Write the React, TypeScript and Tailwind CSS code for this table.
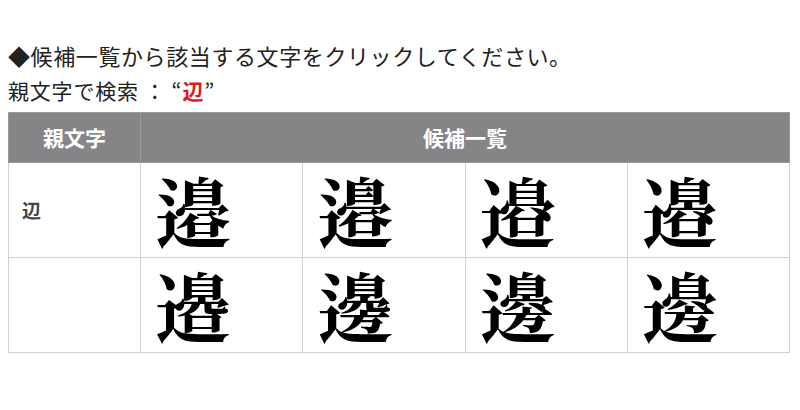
const SANS = "font-['Noto_Sans_CJK_JP','Noto_Sans',sans-serif]";

const rows: string[][] = [
  ["\u9089\u{E0100}", "\u9089\u{E0101}", "\u9089\u{E0102}", "\u9089\u{E0103}"],
  ["\u9089\u{E0104}", "\u908A\u{E0100}", "\u908A\u{E0101}", "\u908A\u{E0102}"],
];

export default function App() {
  return (
    <div className={`w-[800px] h-[410px] bg-white text-[#222] ${SANS}`}>
      <div className="pt-[38px] px-2">
        <p className="text-[22px] leading-[34px] tracking-[0.6px]">
          ◆候補一覧から該当する文字をクリックしてください。
        </p>
        <p className="text-[21px] leading-[34px] tracking-[0.8px] mt-[1px]">
          親文字で検索 ： “<span className="font-bold text-[#e0161b]">辺</span>”
        </p>
        <table className="w-[782px] mt-[5px] border-collapse table-fixed">
          <thead>
            <tr className="h-[50px] bg-[#858587] text-white text-[21px] font-bold">
              <th className="w-[132px] border border-[#9a9a9c]">親文字</th>
              <th colSpan={4} className="border border-[#9a9a9c]">候補一覧</th>
            </tr>
          </thead>
          <tbody>
            {rows.map((r, i) => (
              <tr key={i} className="h-[95px]">
                <td className="border border-[#d2d2d2] pl-[13px] text-[19px] font-bold text-[#444]">
                  {i === 0 ? "辺" : ""}
                </td>
                {r.map((c, j) => (
                  <td
                    key={j}
                    className="border border-[#d2d2d2] pl-[14px] align-middle"
                  >
                    <span className="block font-['Noto_Serif_CJK_JP','Noto_Sans_CJK_JP',serif] font-bold text-[76px] leading-[80px] text-black">
                      {c}
                    </span>
                  </td>
                ))}
              </tr>
            ))}
          </tbody>
        </table>
      </div>
    </div>
  );
}
